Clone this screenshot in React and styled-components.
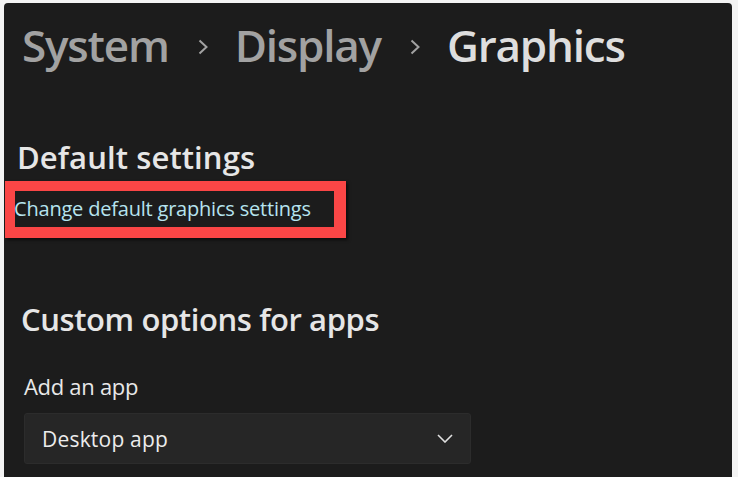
import React from "react";
import styled, { createGlobalStyle } from "styled-components";

const GlobalStyle = createGlobalStyle`
  html, body {
    margin: 0;
    padding: 0;
    background: #f3f3f3;
  }
  body {
    font-family: "Open Sans", "Noto Sans", sans-serif;
  }
`;

const Page = styled.div`
  width: 738px;
  height: 477px;
  box-sizing: border-box;
  padding: 3px 6px 0 4px;
  overflow: hidden;
`;

const Panel = styled.div`
  height: 474px;
  background: #1c1c1c;
  border-radius: 4px 4px 0 0;
  display: flex;
  flex-direction: column;
  align-items: flex-start;
  padding-top: 20px;
  box-sizing: border-box;
`;

const Breadcrumb = styled.div`
  display: flex;
  align-items: center;
  margin-left: 18px;
  font-size: 44px;
  line-height: 1;
  font-weight: 600;
  letter-spacing: -1.2px;
`;

const Crumb = styled.span`
  color: ${(props) => (props.current ? "#dedede" : "#a2a2a2")};
`;

const Sep = styled.span`
  display: flex;
  margin: 0 27px 0 29px;
  padding-top: 3px;
`;

const SectionTitle = styled.h2`
  margin: ${(props) => props.top}px 0 0 ${(props) => props.left}px;
  font-size: ${(props) => props.size}px;
  line-height: 1;
  font-weight: 600;
  color: #e6e6e6;
  letter-spacing: ${(props) => props.spacing}px;
`;

const Highlight = styled.div`
  margin: 8px 0 0 1px;
  border: 10px solid #fa4646;
  border-bottom-width: 11px;
  border-right-width: 12px;
  box-shadow: 2px 2px 3px rgba(0, 0, 0, 0.6);
  height: 36px;
  display: flex;
  align-items: center;
`;

const Link = styled.a`
  font-size: 20px;
  line-height: 36px;
  color: #b6e4ef;
  text-decoration: none;
  margin-left: -1px;
  padding-right: 23px;
  letter-spacing: -0.2px;
`;

const Label = styled.div`
  margin: 40px 0 0 20px;
  font-size: 22px;
  line-height: 1;
  color: #e8e8e8;
  letter-spacing: -0.3px;
`;

const Select = styled.div`
  margin: 16px 0 0 20px;
  width: 447px;
  height: 51px;
  box-sizing: border-box;
  background: #262626;
  border: 1px solid #2c2c2c;
  border-radius: 3px;
  display: flex;
  align-items: center;
  justify-content: space-between;
  padding: 0 17px 0 17px;
  font-size: 21px;
  letter-spacing: 0.2px;
  color: #ececec;
`;

const Chevron = ({ dir, color, w, h }) => (
  <svg width={w} height={h} viewBox={`0 0 ${w} ${h}`} fill="none">
    {dir === "right" ? (
      <polyline points={`1.5,1.5 ${w - 1.5},${h / 2} 1.5,${h - 1.5}`} stroke={color} strokeWidth="2" />
    ) : (
      <polyline points={`1,1 ${w / 2},${h - 1} ${w - 1},1`} stroke={color} strokeWidth="1.6" />
    )}
  </svg>
);

export default function App() {
  return (
    <Page>
      <GlobalStyle />
      <Panel>
        <Breadcrumb>
          <Crumb>System</Crumb>
          <Sep>
            <Chevron dir="right" color="#a2a2a2" w={10} h={16} />
          </Sep>
          <Crumb>Display</Crumb>
          <Sep>
            <Chevron dir="right" color="#a2a2a2" w={10} h={16} />
          </Sep>
          <Crumb current>Graphics</Crumb>
        </Breadcrumb>
        <SectionTitle top={75} left={13} size={31} spacing={0.1}>
          Default settings
        </SectionTitle>
        <Highlight>
          <Link href="#">Change default graphics settings</Link>
        </Highlight>
        <SectionTitle top={66} left={17} size={31} spacing={-0.4}>
          Custom options for apps
        </SectionTitle>
        <Label>Add an app</Label>
        <Select>
          <span>Desktop app</span>
          <Chevron dir="down" color="#e0e0e0" w={16} h={9} />
        </Select>
      </Panel>
    </Page>
  );
}
